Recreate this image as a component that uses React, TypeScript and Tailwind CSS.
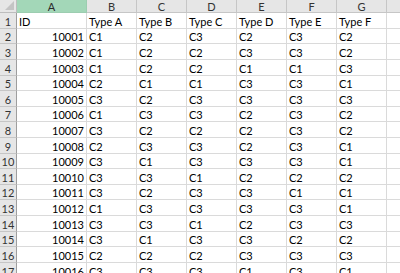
const cols = ["A", "B", "C", "D", "E", "F", "G"];

const rows: string[][] = [
  ["ID", "Type A", "Type B", "Type C", "Type D", "Type E", "Type F"],
  ["10001", "C1", "C2", "C3", "C2", "C3", "C2"],
  ["10002", "C1", "C2", "C2", "C3", "C3", "C2"],
  ["10003", "C1", "C2", "C2", "C1", "C1", "C3"],
  ["10004", "C2", "C1", "C1", "C3", "C3", "C1"],
  ["10005", "C3", "C2", "C3", "C3", "C3", "C3"],
  ["10006", "C1", "C3", "C3", "C2", "C3", "C2"],
  ["10007", "C3", "C2", "C2", "C2", "C3", "C2"],
  ["10008", "C2", "C3", "C3", "C2", "C3", "C1"],
  ["10009", "C3", "C1", "C3", "C3", "C3", "C1"],
  ["10010", "C3", "C3", "C1", "C2", "C2", "C2"],
  ["10011", "C3", "C2", "C3", "C3", "C1", "C1"],
  ["10012", "C1", "C3", "C3", "C3", "C3", "C1"],
  ["10013", "C3", "C3", "C1", "C2", "C3", "C3"],
  ["10014", "C3", "C1", "C3", "C3", "C2", "C2"],
  ["10015", "C2", "C2", "C2", "C3", "C3", "C3"],
  ["10016", "C3", "C3", "C3", "C1", "C3", "C1"],
];

// rows are not all the same height in the capture (scaled), so list them
const heights = [16, 15, 16, 16, 15, 16, 15, 16, 16, 15, 16, 15, 16, 16, 15, 16, 16];

export default function App() {
  return (
    <div
      className="w-[400px] h-[273px] overflow-hidden bg-white text-[11px] text-black"
      style={{ fontFamily: "Lato, 'Liberation Sans', sans-serif" }}
    >
      <div className="grid grid-cols-[17px_70px_50px_50px_50px_50px_50px_50px_1fr] grid-rows-[13px]">
        {/* corner */}
        <div className="relative bg-[#e6e6e6] border-r border-b border-[#bdbdbd]">
          <div className="absolute right-[2px] bottom-[2px] w-0 h-0 border-l-[9px] border-l-transparent border-b-[9px] border-b-[#c4c4c4]" />
        </div>
        {cols.map((c, i) => (
          <div
            key={c}
            className={
              i === 0
                ? "flex items-center justify-center bg-[#a3d7b8] border-r border-b border-[#9ccdb0] text-[#2b2b2b] leading-none"
                : "flex items-center justify-center bg-[#e6e6e6] border-r border-b border-[#c6c6c6] text-[#333] leading-none"
            }
          >
            {c}
          </div>
        ))}
        <div className="bg-[#e6e6e6] border-b border-[#c6c6c6]" />
      </div>

      {rows.map((r, ri) => (
        <div
          key={ri}
          className="grid grid-cols-[17px_70px_50px_50px_50px_50px_50px_50px_1fr]"
          style={{ height: heights[ri] }}
        >
          <div className="flex items-end justify-center pb-[1px] bg-[#e6e6e6] border-r border-r-[#9e9e9e] border-b border-b-[#c6c6c6] text-[#333] leading-none">
            {ri + 1}
          </div>
          {r.map((v, ci) => (
            <div
              key={ci}
              className={
                "flex items-end pb-[1px] px-[2px] border-r border-b border-[#dadada] leading-none whitespace-nowrap " +
                (ri > 0 && ci === 0 ? "justify-end" : "justify-start")
              }
            >
              {v}
            </div>
          ))}
          <div className="border-b border-[#dadada]" />
        </div>
      ))}
    </div>
  );
}
